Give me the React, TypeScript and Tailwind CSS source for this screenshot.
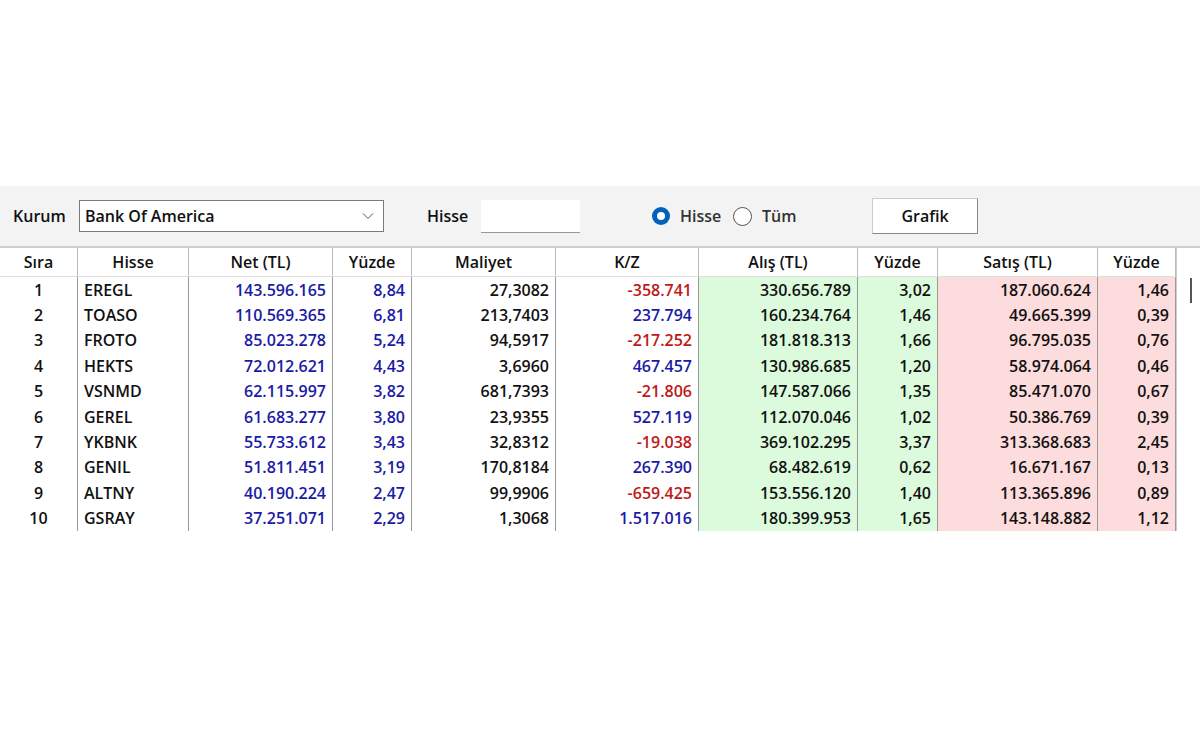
const rows = [
  ["1","EREGL","143.596.165","8,84","27,3082","-358.741","330.656.789","3,02","187.060.624","1,46"],
  ["2","TOASO","110.569.365","6,81","213,7403","237.794","160.234.764","1,46","49.665.399","0,39"],
  ["3","FROTO","85.023.278","5,24","94,5917","-217.252","181.818.313","1,66","96.795.035","0,76"],
  ["4","HEKTS","72.012.621","4,43","3,6960","467.457","130.986.685","1,20","58.974.064","0,46"],
  ["5","VSNMD","62.115.997","3,82","681,7393","-21.806","147.587.066","1,35","85.471.070","0,67"],
  ["6","GEREL","61.683.277","3,80","23,9355","527.119","112.070.046","1,02","50.386.769","0,39"],
  ["7","YKBNK","55.733.612","3,43","32,8312","-19.038","369.102.295","3,37","313.368.683","2,45"],
  ["8","GENIL","51.811.451","3,19","170,8184","267.390","68.482.619","0,62","16.671.167","0,13"],
  ["9","ALTNY","40.190.224","2,47","99,9906","-659.425","153.556.120","1,40","113.365.896","0,89"],
  ["10","GSRAY","37.251.071","2,29","1,3068","1.517.016","180.399.953","1,65","143.148.882","1,12"],
];
const heads = ["Sıra","Hisse","Net (TL)","Yüzde","Maliyet","K/Z","Alış (TL)","Yüzde","Satış (TL)","Yüzde"];
const widths = [78,111,144,79,144,143,159,80,160,78];

export default function App() {
  return (
    <div className="w-[1200px] h-[750px] bg-white text-[#111] text-[16px] font-semibold" style={{fontFamily: '"Open Sans", "Liberation Sans", sans-serif'}}>
      <div className="h-[186px]" />
      <div className="h-[60px] bg-[#f3f3f3] flex items-center">
        <span className="ml-[13px] w-[64px]">Kurum</span>
        <div className="ml-[2px] w-[305px] h-[32px] bg-white border border-[#7a7a7a] flex items-center justify-between px-[5px]">
          <span>Bank Of America</span>
          <svg width="12" height="8" viewBox="0 0 12 8" className="mr-[4px]"><path d="M1 1.5 L6 6.5 L11 1.5" fill="none" stroke="#555" strokeWidth="1"/></svg>
        </div>
        <span className="ml-[43px] w-[54px]">Hisse</span>
        <div className="w-[99px] h-[33px] bg-white border-b border-[#999]" />
        <div className="ml-[72px] w-[18px] h-[18px] rounded-full bg-[#0062b8] flex items-center justify-center"><div className="w-[8px] h-[8px] rounded-full bg-white" /></div>
        <span className="ml-[10px] w-[53px] text-[#333]">Hisse</span>
        <div className="w-[19px] h-[19px] rounded-full border border-[#555] bg-white" />
        <span className="ml-[10px] w-[110px] text-[#333]">Tüm</span>
        <div className="w-[106px] h-[36px] bg-white border border-[#ccc] border-b-[#888] border-r-[#888] flex items-center justify-center">Grafik</div>
      </div>
      <div className="flex border-t-2 border-[#cfcfcf]">
        <div>
          <div className="flex h-[29px] border-b border-[#ddd]">
            {heads.map((h, i) => (
              <div key={i} className="flex items-center justify-center border-r border-[#bbb]" style={{width: widths[i]}}>{h}</div>
            ))}
          </div>
          {rows.map((r) => (
            <div key={r[0]} className="flex h-[25.4px]">
              {r.map((c, i) => {
                let cls = "flex items-center border-r border-[#999] px-[6px] ";
                cls += i === 0 ? "justify-center " : i === 1 ? "justify-start " : "justify-end ";
                if (i === 2 || i === 3) cls += "text-[#1a1aa6] ";
                if (i === 5) cls += c.startsWith("-") ? "text-[#c01818] " : "text-[#1a1aa6] ";
                if (i === 6 || i === 7) cls += "bg-[#dcfbdc] ";
                if (i === 8 || i === 9) cls += "bg-[#fcdcdc] ";
                return <div key={i} className={cls} style={{width: widths[i]}}>{c}</div>;
              })}
            </div>
          ))}
        </div>
        <div className="flex-1 border-l border-[#ccc] bg-white">
          <div className="h-[29px]" />
          <div className="ml-[13px] mt-[1px] w-[2px] h-[25px] bg-[#555]" />
        </div>
      </div>
    </div>
  );
}
